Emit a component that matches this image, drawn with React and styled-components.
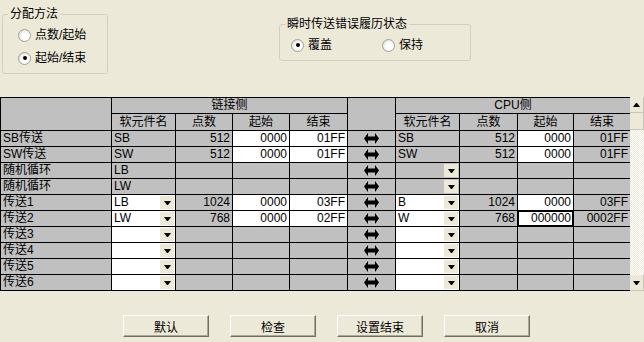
import styled, { createGlobalStyle } from 'styled-components'

const GlobalStyle = createGlobalStyle`
    html, body {
        margin: 0;
        padding: 0;
        background: #ECE9D8;
    }
    body {
        font-family: "Liberation Sans", "Noto Sans CJK SC", sans-serif;
        font-size: 12px;
        color: #000;
    }
`;

const Page = styled.div`
    width: 644px;
    height: 342px;
    overflow: hidden;
    background: #ECE9D8;
`;

const TopArea = styled.div`
    display: flex;
    align-items: flex-start;
    height: 97px;
`;

const GroupBox = styled.fieldset`
    box-sizing: border-box;
    margin: ${p => p.$top}px 0 0 ${p => p.$left}px;
    padding: 0;
    min-width: 0;
    width: ${p => p.$width}px;
    height: ${p => p.$height}px;
    border: 1px solid #D0D0BF;
    border-radius: 3px;
`;

const Legend = styled.legend`
    margin-left: 5px;
    padding: 0 2px;
    line-height: 14px;
    font-size: 12px;
`;

const RadioList = styled.div`
    display: flex;
    flex-direction: ${p => p.$row ? 'row' : 'column'};
    gap: ${p => p.$row ? 0 : 7}px;
    padding: 6px 0 0 ${p => p.$indent}px;
`;

const RadioItem = styled.label`
    display: flex;
    align-items: center;
    gap: 4px;
    height: 16px;
    width: ${p => p.$width ? `${p.$width}px` : 'auto'};
    line-height: 16px;
`;

const Circle = styled.span`
    box-sizing: border-box;
    width: 13px;
    height: 13px;
    border-radius: 50%;
    border: 1px solid #A3A196;
    background: radial-gradient(circle at 62% 62%, #fff 35%, #D6D3C6 100%);
    display: flex;
    align-items: center;
    justify-content: center;

    &::after {
        content: '';
        width: 4px;
        height: 4px;
        border-radius: 50%;
        background: ${p => p.$checked ? '#000' : 'transparent'};
    }
`;

const TableArea = styled.div`
    display: flex;
`;

const Grid = styled.div`
    box-sizing: border-box;
    width: 630px;
    display: grid;
    grid-template-columns: 110px 63px 56px 56px 57px 47px 63px 57px 55px 56px;
    grid-template-rows: 15px 16px repeat(10, 15px);
    gap: 1px;
    background: #000;
    border: 1px solid #000;
    border-right: none;
`;

const HeadCell = styled.div`
    grid-column: ${p => p.$col};
    grid-row: ${p => p.$row};
    background: #C0C0C0;
    display: flex;
    align-items: center;
    justify-content: center;
    line-height: 15px;
`;

const Cell = styled.div`
    background: ${p => p.$white ? '#fff' : '#C0C0C0'};
    display: flex;
    align-items: center;
    justify-content: ${p => p.$right ? 'flex-end' : 'flex-start'};
    padding: 0 ${p => p.$drop ? 1 : 2}px 0 2px;
    line-height: 15px;
    white-space: nowrap;
    overflow: hidden;
    box-shadow: ${p => p.$focus ? 'inset 0 0 0 1px #000, inset 0 0 0 2px #fff' : 'none'};
`;

const CellText = styled.span`
    flex: ${p => p.$grow ? 1 : 'none'};
`;

const DropBtn = styled.span`
    width: 14px;
    height: 13px;
    background: #ECE9D8;
    display: flex;
    align-items: center;
    justify-content: center;

    &::after {
        content: '';
        width: 1px;
        height: 0;
        border-left: 3px solid transparent;
        border-right: 3px solid transparent;
        border-top: 4px solid #000;
        margin-top: 1px;
    }
`;

const ArrowCell = styled.div`
    background: #C0C0C0;
    display: flex;
    align-items: center;
    justify-content: center;
`;

const Scrollbar = styled.div`
    width: 14px;
    height: 194px;
    display: flex;
    flex-direction: column;
    background: repeating-conic-gradient(#fff 0 25%, #ECE9D8 0 50%) 0 0 / 2px 2px;
`;

const ScrollBtn = styled.div`
    box-sizing: border-box;
    height: ${p => p.$h}px;
    background: #ECE9D8;
    border-bottom: 1px solid #C9C6B8;
    border-right: 1px solid #C9C6B8;
    display: flex;
    align-items: center;
    justify-content: center;

    &::after {
        content: '';
        display: ${p => p.$dir ? 'block' : 'none'};
        width: 1px;
        height: 0;
        border-left: 3px solid transparent;
        border-right: 3px solid transparent;
        border-top: ${p => p.$dir === 'down' ? '4px solid #000' : 'none'};
        border-bottom: ${p => p.$dir === 'up' ? '4px solid #000' : 'none'};
    }
`;

const Track = styled.div`
    flex: 1;
`;

const ButtonBar = styled.div`
    display: flex;
    gap: 21px;
    padding: 24px 0 0 123px;
`;

const Button = styled.button`
    box-sizing: border-box;
    width: 86px;
    height: 22px;
    padding: 0;
    background: #ECE9D8;
    border: 1px solid;
    border-color: #fff #716F64 #716F64 #fff;
    box-shadow: inset -1px -1px #ACA899;
    font-family: "Liberation Sans", "Noto Sans CJK SC", sans-serif;
    font-size: 12px;
    color: #000;
`;

const Arrow = () => (
    <svg width="15" height="11" viewBox="0 0 15 11">
        <path d="M0 5.5 L4 0 L4 3.5 L11 3.5 L11 0 L15 5.5 L11 11 L11 7.5 L4 7.5 L4 11 Z" fill="#000" />
    </svg>
)

const g = (t = '', o = {}) => ({ t, ...o })

const rows = [
    {
        label: 'SB传送',
        left: [g('SB'), g('512', { r: 1 }), g('0000', { r: 1, w: 1 }), g('01FF', { r: 1, w: 1 })],
        right: [g('SB'), g('512', { r: 1 }), g('0000', { r: 1, w: 1 }), g('01FF', { r: 1 })],
    },
    {
        label: 'SW传送',
        left: [g('SW'), g('512', { r: 1 }), g('0000', { r: 1, w: 1 }), g('01FF', { r: 1, w: 1 })],
        right: [g('SW'), g('512', { r: 1 }), g('0000', { r: 1, w: 1 }), g('01FF', { r: 1 })],
    },
    {
        label: '随机循环',
        left: [g('LB'), g(), g(), g()],
        right: [g('', { d: 1 }), g(), g(), g()],
    },
    {
        label: '随机循环',
        left: [g('LW'), g(), g(), g()],
        right: [g('', { d: 1 }), g(), g(), g()],
    },
    {
        label: '传送1',
        left: [g('LB', { w: 1, d: 1 }), g('1024', { r: 1 }), g('0000', { r: 1, w: 1 }), g('03FF', { r: 1, w: 1 })],
        right: [g('B', { w: 1, d: 1 }), g('1024', { r: 1 }), g('0000', { r: 1, w: 1 }), g('03FF', { r: 1 })],
    },
    {
        label: '传送2',
        left: [g('LW', { w: 1, d: 1 }), g('768', { r: 1 }), g('0000', { r: 1, w: 1 }), g('02FF', { r: 1, w: 1 })],
        right: [g('W', { w: 1, d: 1 }), g('768', { r: 1 }), g('000000', { r: 1, w: 1, f: 1 }), g('0002FF', { r: 1 })],
    },
    ...[3, 4, 5, 6].map(n => ({
        label: `传送${n}`,
        left: [g('', { w: 1, d: 1 }), g(), g(), g()],
        right: [g('', { w: 1, d: 1 }), g(), g(), g()],
    })),
]

const DataCell = ({ c }) => (
    <Cell $white={c.w} $right={c.r} $drop={c.d} $focus={c.f}>
        <CellText $grow={c.d}>{c.t}</CellText>
        {c.d && <DropBtn />}
    </Cell>
)

const App = () => {
    const cols = ['软元件名', '点数', '起始', '结束']
    return (
        <Page>
            <GlobalStyle />
            <TopArea>
                <GroupBox $left={2} $top={7} $width={106} $height={67}>
                    <Legend>分配方法</Legend>
                    <RadioList $indent={15}>
                        <RadioItem><Circle />点数/起始</RadioItem>
                        <RadioItem><Circle $checked />起始/结束</RadioItem>
                    </RadioList>
                </GroupBox>
                <GroupBox $left={171} $top={17} $width={192} $height={44}>
                    <Legend>瞬时传送错误履历状态</Legend>
                    <RadioList $row $indent={11}>
                        <RadioItem $width={91}><Circle $checked />覆盖</RadioItem>
                        <RadioItem><Circle />保持</RadioItem>
                    </RadioList>
                </GroupBox>
            </TopArea>

            <TableArea>
                <Grid>
                    <HeadCell $col="1" $row="1 / span 2" />
                    <HeadCell $col="2 / span 4" $row="1">链接侧</HeadCell>
                    <HeadCell $col="6" $row="1 / span 2" />
                    <HeadCell $col="7 / span 4" $row="1">CPU侧</HeadCell>
                    {cols.map((c, i) => <HeadCell key={'l' + c} $col={`${i + 2}`} $row="2">{c}</HeadCell>)}
                    {cols.map((c, i) => <HeadCell key={'r' + c} $col={`${i + 7}`} $row="2">{c}</HeadCell>)}
                    {rows.map((row, i) => [
                        <Cell key={'lab' + i}>{row.label}</Cell>,
                        ...row.left.map((c, j) => <DataCell key={`l${i}-${j}`} c={c} />),
                        <ArrowCell key={'arr' + i}><Arrow /></ArrowCell>,
                        ...row.right.map((c, j) => <DataCell key={`r${i}-${j}`} c={c} />),
                    ])}
                </Grid>
                <Scrollbar>
                    <ScrollBtn $h={16} $dir="up" />
                    <ScrollBtn $h={17} />
                    <Track />
                    <ScrollBtn $h={16} $dir="down" />
                </Scrollbar>
            </TableArea>

            <ButtonBar>
                <Button>默认</Button>
                <Button>检查</Button>
                <Button>设置结束</Button>
                <Button>取消</Button>
            </ButtonBar>
        </Page>
    )
}

export default App
